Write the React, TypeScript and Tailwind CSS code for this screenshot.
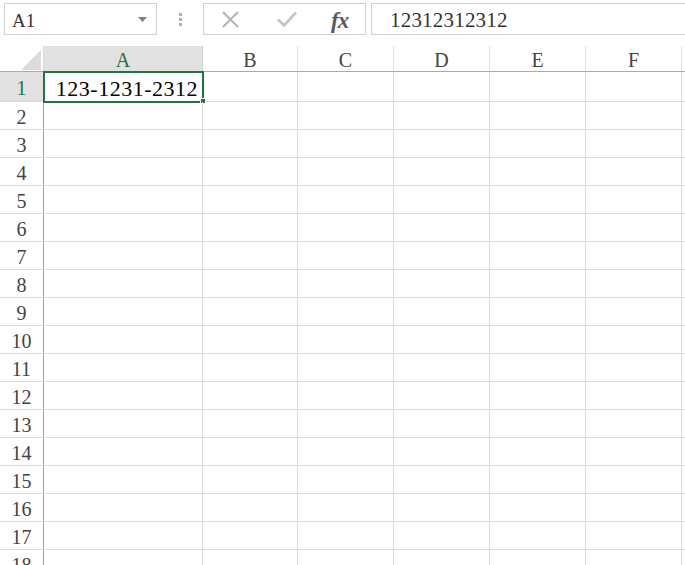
import React from "react";

const COLS = [
  { name: "A", w: "w-[159px]" },
  { name: "B", w: "w-[95px]" },
  { name: "C", w: "w-[96px]" },
  { name: "D", w: "w-[96px]" },
  { name: "E", w: "w-[96px]" },
  { name: "F", w: "w-[96px]" },
];

const ROWS = Array.from({ length: 18 }, (_, i) => i + 1);

export default function App() {
  return (
    <div className="w-[685px] h-[565px] overflow-hidden bg-white flex flex-col text-[#333] font-['Liberation_Serif','Times_New_Roman',serif]">
      {/* Formula bar */}
      <div className="h-[46px] flex items-start pt-[3px] shrink-0">
        {/* Name box */}
        <div className="ml-[4px] w-[153px] h-[32px] border border-[#d0d0d0] flex items-center justify-between pl-[7px] pr-[9px]">
          <span className="text-[19px] leading-none text-[#333] pt-[2px]">A1</span>
          <svg width="9" height="5" viewBox="0 0 9 5"><path d="M0 0h9L4.5 5z" fill="#808080" /></svg>
        </div>
        {/* Dots */}
        <div className="w-[46px] h-[32px] flex flex-col items-center justify-center gap-[2px]">
          <span className="w-[3px] h-[3px] bg-[#b0b0b0]" />
          <span className="w-[3px] h-[3px] bg-[#b0b0b0]" />
          <span className="w-[3px] h-[3px] bg-[#b0b0b0]" />
        </div>
        {/* Buttons */}
        <div className="w-[163px] h-[32px] border border-[#d0d0d0] flex items-center">
          <svg className="ml-[18px]" width="17" height="17" viewBox="0 0 17 17">
            <path d="M1 1L16 16M16 1L1 16" stroke="#b4b4b4" strokeWidth="2" />
          </svg>
          <svg className="ml-[38px]" width="20" height="16" viewBox="0 0 20 16">
            <path d="M1 8.5L7 14.5L19 1.5" stroke="#c4c4c4" strokeWidth="2.6" fill="none" />
          </svg>
          <span className="ml-[34px] text-[23px] italic text-[#5a5a5a] leading-none font-bold tracking-[-1px] pt-[2px]">fx</span>
        </div>
        {/* Formula input */}
        <div className="ml-[5px] flex-1 h-[32px] border border-[#d0d0d0] border-r-0 flex items-center pl-[18px]">
          <span className="text-[21px] leading-none text-[#333] pt-[2px] tracking-[0.2px]">12312312312</span>
        </div>
      </div>

      {/* Grid */}
      <div className="flex flex-col">
        {/* Column headers */}
        <div className="flex h-[26px] border-b border-[#ababab] shrink-0">
          <div className="w-[44px] h-full border-r border-[#d8d8d8] flex items-end justify-end pr-[2px] pb-[1px]">
            <svg width="20" height="20" viewBox="0 0 20 20"><path d="M20 0V20H0z" fill="#dcdcdc" /></svg>
          </div>
          {COLS.map((c) =>
            c.name === "A" ? (
              <div key={c.name} className={`${c.w} h-full bg-[#e1e1e1] border-r border-[#d0d0d0] flex items-center justify-center pt-[3px] text-[20px] text-[#217346]`}>
                {c.name}
              </div>
            ) : (
              <div key={c.name} className={`${c.w} h-full border-r border-[#e0e0e0] flex items-center justify-center pt-[3px] text-[20px] text-[#444]`}>
                {c.name}
              </div>
            )
          )}
        </div>

        {/* Rows */}
        {ROWS.map((r) => (
          <div key={r} className={`flex border-b border-[#dadada] shrink-0 ${r === 1 ? "h-[30px]" : "h-[28px]"}`}>
            <div
              className={`w-[44px] h-full border-r border-[#a0a0a0] flex items-center justify-center pt-[3px] text-[20px] ${
                r === 1 ? "bg-[#e1e1e1] text-[#217346]" : "text-[#444]"
              }`}
            >
              {r}
            </div>
            {COLS.map((c) => (
              <div key={c.name} className={`${c.w} h-full border-r border-[#dadada] relative`}>
                {r === 1 && c.name === "A" && (
                  <>
                    <div className="absolute inset-0 flex items-center justify-end pr-[4px] pt-[4px] text-[22px] text-black tracking-[0.5px] leading-none">
                      123-1231-2312
                    </div>
                    <div className="absolute -left-[1px] -top-[1px] w-[161px] h-[32px] border-2 border-[#217346]" />
                    <div className="absolute left-[156px] top-[26px] w-[6px] h-[6px] bg-[#217346] border border-white" />
                  </>
                )}
              </div>
            ))}
          </div>
        ))}
      </div>
    </div>
  );
}
